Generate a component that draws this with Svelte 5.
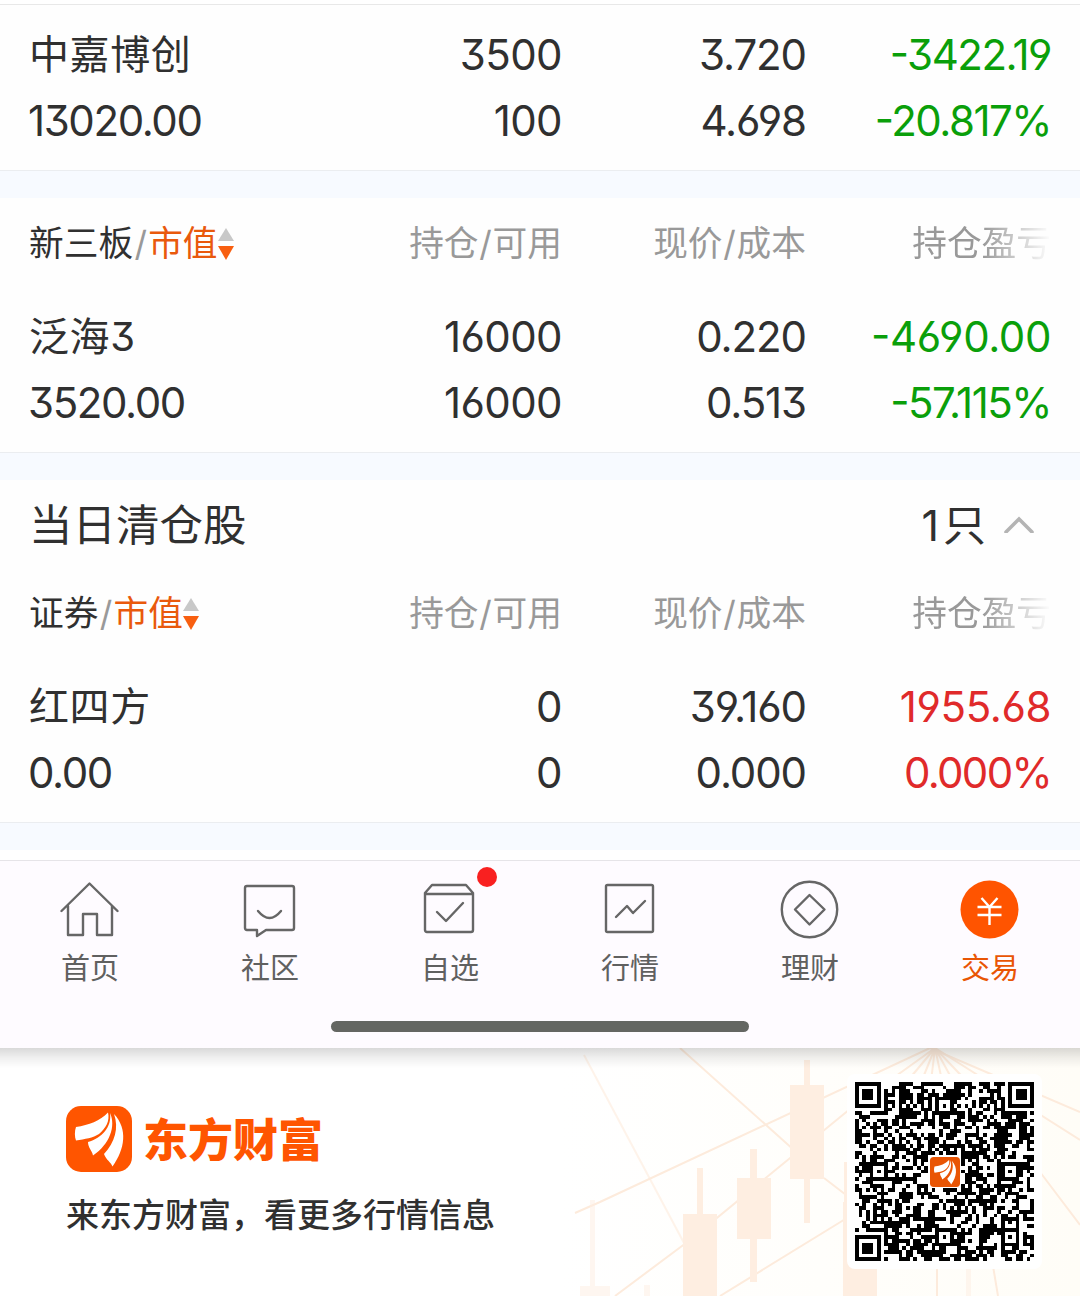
<script lang="ts">
	type Holding = {
		name: string;
		value: string;
		amount: string;
		available: string;
		price: string;
		cost: string;
		profit: string;
		rate: string;
		trend: 'up' | 'down';
		loose?: boolean;
	};

	const main: Holding = {
		name: '中嘉博创', value: '13020.00', amount: '3500', available: '100',
		price: '3.720', cost: '4.698', profit: '-3422.19', rate: '-20.817%', trend: 'down'
	};
	const neeq: Holding = {
		name: '泛海3', value: '3520.00', amount: '16000', available: '16000',
		price: '0.220', cost: '0.513', profit: '-4690.00', rate: '-57.115%', trend: 'down', loose: true
	};
	const cleared: Holding = {
		name: '红四方', value: '0.00', amount: '0', available: '0',
		price: '39.160', cost: '0.000', profit: '1955.68', rate: '0.000%', trend: 'up', loose: true
	};

	const tabs = [
		{ id: 'home', label: '首页' },
		{ id: 'social', label: '社区' },
		{ id: 'watch', label: '自选' },
		{ id: 'market', label: '行情' },
		{ id: 'wealth', label: '理财' },
		{ id: 'trade', label: '交易' }
	];
	let active = $state('trade');

	const QR_SIZE = 49;

	// concentric squares used by both finder and alignment marks
	function ring(x: number, y: number, cx: number, cy: number, r: number) {
		const d = Math.max(Math.abs(x - cx), Math.abs(y - cy));
		if (d > r) return null;
		return r === 2 ? d !== 1 : d !== 2 && d !== 4;
	}

	function buildQr() {
		let seed = 20817;
		let path = '';
		for (let y = 0; y < QR_SIZE; y++) {
			for (let x = 0; x < QR_SIZE; x++) {
				seed = (seed * 1103515245 + 12345) % 2147483648;
				let on = (seed >> 12) % 100 < 54;
				if (x === 6 || y === 6) on = (x + y) % 2 === 0;
				for (const cy of [6, 24, 42]) {
					for (const cx of [6, 24, 42]) {
						on = ring(x, y, cx, cy, 2) ?? on;
					}
				}
				for (const [cx, cy] of [[3, 3], [45, 3], [3, 45]]) {
					on = ring(x, y, cx, cy, 4) ?? on;
				}
				if (Math.abs(x - 24) < 5 && Math.abs(y - 24) < 5) on = false;
				if (on) path += `M${x} ${y}h1v1h-1z`;
			}
		}
		return path;
	}
	const qr = buildQr();
</script>

{#snippet row(h: Holding)}
	<div class="grid row">
		<div class="holding"><span class="name">{h.name}</span><span>{h.value}</span></div>
		<div class="amount"><span>{h.amount}</span><span>{h.available}</span></div>
		<div class="price"><span>{h.price}</span><span>{h.cost}</span></div>
		<div class={h.trend}><span class:loose={h.loose}>{h.profit}</span><span>{h.rate}</span></div>
	</div>
{/snippet}

{#snippet head(title: string)}
	<div class="grid head">
		<div class="sort">
			<span class="dark">{title}</span><span class="slash">/</span><span class="orange">市值</span>
			<svg width="16" height="32" viewBox="0 0 16 32">
				<path d="M8 0l8 13H0z" fill="#c8c8c8" />
				<path d="M0 18h16L8 32z" fill="#f85f10" />
			</svg>
		</div>
		<div>持仓<span class="slash">/</span>可用</div>
		<div>现价<span class="slash">/</span>成本</div>
		<div class="fade">持仓盈亏</div>
	</div>
{/snippet}

{#snippet wing()}
	<path d="M10 21C23 19 34 15 42 6.500C44 15 40 22 33 28C27 32 19 33 10 34.500C8.500 31 8.500 25 10 21z" />
	<path d="M44 7C50 20 44 38 27 49.500C26 44 22 42 22 36C36 32 46 21 44 7z" />
	<path d="M48 8C62 23 59 43 46.500 60.500C45 56 40 54 38 48C49 36 53 22 48 8z" />
{/snippet}

<div class="page">
	<section class="first">{@render row(main)}</section>
	<section>
		{@render head('新三板')}
		{@render row(neeq)}
	</section>
	<section>
		<div class="title">
			<h2>当日清仓股</h2>
			<span class="count"><b>1</b>只</span>
			<svg width="30" height="18" viewBox="0 0 30 18" fill="none" stroke="#b4b4b4" stroke-width="3.6" stroke-linecap="round">
				<path d="M2 17L15 4L28 17" />
			</svg>
		</div>
		{@render head('证券')}
		{@render row(cleared)}
	</section>

	<nav>
		<div class="tabs">
			{#each tabs as tab (tab.id)}
				<button class:active={active === tab.id} onclick={() => (active = tab.id)}>
					<svg width="60" height="60" viewBox="0 0 60 60" fill="none" stroke="#666" stroke-width="2.4" stroke-linejoin="round" stroke-linecap="round">
						{#if tab.id === 'home'}
							<path d="M1.500 31L29.500 3.500L57.500 31M8 26V55H23V34H37V55H52V26" />
						{:else if tab.id === 'social'}
							<path d="M7 6H52Q54 6 54 8V48Q54 50 52 50H26L17 56V50H7Q5 50 5 48V8Q5 6 7 6z" />
							<path d="M18 31Q29.500 45 41 31" />
						{:else if tab.id === 'watch'}
							<path d="M5 14H53V50Q53 52 51 52H7Q5 52 5 50V13L12 5H46L53 13V15M17 32L26 41L43 23" />
						{:else if tab.id === 'market'}
							<rect x="6" y="5" width="47" height="47" rx="1.5" />
							<path d="M16 37L27 26L33 33L45 21" />
						{:else if tab.id === 'wealth'}
							<circle cx="29.5" cy="29.5" r="27.7" />
							<path d="M29.500 15L44.500 29.500L29.500 44.500L15 29.500z" />
						{:else}
							<circle cx="29.5" cy="29.5" r="29" fill="#ff5400" stroke="none" />
							<path d="M21.500 18L29.500 27L37.500 18M29.500 27V45M17.500 27H41.500M17.500 35H41.500" stroke="#fff" stroke-linecap="butt" />
						{/if}
					</svg>
					{#if tab.id === 'watch'}<i class="dot"></i>{/if}
					<span>{tab.label}</span>
				</button>
			{/each}
		</div>
		<div class="handle"></div>
	</nav>

	<footer>
		<svg class="backdrop" width="520" height="248" viewBox="560 1048 520 248">
			<defs>
				<linearGradient id="warm" x1="0" x2="1">
					<stop offset="0" stop-color="#fff" />
					<stop offset="1" stop-color="#fffdf7" />
				</linearGradient>
			</defs>
			<rect x="560" y="1048" width="520" height="248" fill="url(#warm)" />
			<g fill="none" stroke="#fdebdc" stroke-width="2">
				<path d="M584 1055L684 1243" opacity=".6" />
				<path d="M680 1048L795 1151" />
				<path d="M575 1213L600 1202L930 1048L1080 1112" />
				<path d="M615 1296L690 1240L850 1109L935 1048L1080 1140" />
				<path d="M720 1296L860 1210M824 1178L850 1198" />
				<path d="M935 1048L900 1090M935 1048L918 1090M935 1048L930 1090M935 1048L944 1090M935 1048L958 1090M935 1048L975 1090" />
				<path d="M1040 1172L1080 1225M937 1260V1296M992 1260L998 1296" />
			</g>
			<g fill="#feeee1">
				<path d="M790 1085H824V1179H790zM804 1060H810V1085H804zM804 1179H810V1223H804z" />
				<path d="M737 1178H771V1239H737zM750 1149H757V1178H750zM750 1239H757V1282H750z" />
				<path d="M683 1214H717V1296H683zM697 1168H703V1214H697z" />
				<path d="M843 1202H877V1296H843zM844 1162H850V1202H844z" />
				<path d="M580 1286H610V1296H580zM590 1200H595V1286H590zM644 1285H650V1296H644zM966 1260H971V1296H966z" opacity=".5" />
			</g>
		</svg>
		<div class="brand">
			<div class="logo">
				<svg width="66" height="66" viewBox="0 0 66 66">
					<rect width="66" height="66" rx="15" fill="#ff5500" />
					<g fill="#fff">{@render wing()}</g>
				</svg>
				<strong>东方财富</strong>
			</div>
			<p>来东方财富，看更多行情信息</p>
		</div>
		<div class="qr">
			<svg width="179" height="179" viewBox="0 0 49 49" shape-rendering="crispEdges">
				<path d={qr} />
			</svg>
			<svg class="badge" width="30" height="30" viewBox="0 0 66 66">
				<rect width="66" height="66" rx="8" fill="#e95504" />
				<g fill="#fff">{@render wing()}</g>
			</svg>
		</div>
	</footer>
</div>

<style>
	:global(body) {
		margin: 0;
		background: #fff;
	}

	.page {
		width: 1080px;
		height: 1296px;
		overflow: hidden;
		display: flex;
		flex-direction: column;
		font-family: Inter, 'Noto Sans CJK SC', sans-serif;
		color: #303030;
	}

	section {
		box-sizing: border-box;
		background: #fefefe;
		border-bottom: 1px solid #ebedf0;
		box-shadow: 0 27px #f7faff;
		margin-bottom: 27px;
		flex: none;
	}

	.first {
		margin-top: 4px;
		border-top: 1px solid #e8e8e8;
		padding-top: 17px;
	}

	.grid {
		display: grid;
		grid-template-columns: 289px 244px 244px 245px;
		padding-left: 29px;
	}

	.grid > div:not(:first-child) {
		text-align: right;
	}

	.row {
		height: 148px;
		font-size: 42px;
		line-height: 66px;
		font-feature-settings: 'case', 'cv03', 'cv04', 'cv09';
	}

	.row span {
		display: block;
		white-space: nowrap;
	}

	.holding {
		letter-spacing: -1.4px;
		margin-left: -1px;
	}

	.row .name {
		margin-left: 1px;
		font-size: 40px;
		letter-spacing: 0.6px;
	}

	.amount {
		letter-spacing: -0.6px;
	}

	.price {
		letter-spacing: -1.1px;
	}

	.down {
		color: #0a9f0a;
		letter-spacing: -1.5px;
	}

	.up {
		color: #e02a2a;
		letter-spacing: -1.7px;
	}

	.row .loose {
		letter-spacing: -0.4px;
	}

	.head {
		height: 106px;
		line-height: 91px;
		font-size: 34.7px;
		color: #999;
	}

	.sort {
		display: flex;
		align-items: center;
		height: 91px;
	}

	.slash {
		margin: 0 0.8px;
	}

	.sort .slash {
		margin: 0 1.3px;
	}

	.dark {
		color: #303030;
	}

	.orange {
		color: #e9590c;
	}

	.fade {
		-webkit-mask-image: linear-gradient(90deg, #000 72%, transparent 100%);
		mask-image: linear-gradient(90deg, #000 72%, transparent 100%);
	}

	.title {
		box-sizing: border-box;
		display: flex;
		align-items: center;
		height: 88px;
		padding: 0 46px 0 29px;
		font-size: 43px;
	}

	h2 {
		margin: 0 0 4px;
		flex: 1;
		font-size: 43.5px;
		font-weight: 400;
	}

	.count {
		margin: 0 18px 4px 0;
	}

	b {
		margin-right: 4px;
		font-weight: 400;
	}

	nav {
		box-sizing: border-box;
		flex: none;
		height: 188px;
		margin-top: 10px;
		border-top: 1px solid #e6e4e8;
		background: #fefbff;
	}

	.tabs {
		display: grid;
		grid-template-columns: repeat(6, 180px);
		height: 160px;
	}

	button {
		display: flex;
		flex-direction: column;
		align-items: center;
		position: relative;
		padding: 19px 0 0;
		border: 0;
		background: none;
		font: inherit;
		font-size: 29px;
		line-height: 57px;
		color: #606060;
	}

	button.active {
		color: #e95504;
	}

	.dot {
		position: absolute;
		left: 117px;
		top: 6px;
		width: 20px;
		height: 20px;
		border-radius: 50%;
		background: #f92020;
	}

	.handle {
		width: 418px;
		height: 11px;
		margin: 0 auto;
		border-radius: 6px;
		background: #646662;
	}

	footer {
		box-sizing: border-box;
		position: relative;
		display: flex;
		justify-content: space-between;
		height: 248px;
		padding: 26px 38px 0 66px;
	}

	footer::after {
		content: '';
		position: absolute;
		inset: 0 0 auto;
		height: 20px;
		background: linear-gradient(rgba(0, 0, 0, 0.15), rgba(0, 0, 0, 0.06) 50%, transparent);
	}

	.backdrop {
		position: absolute;
		right: 0;
		top: 0;
	}

	.brand {
		padding-top: 32px;
	}

	.logo {
		display: flex;
		align-items: center;
		gap: 11px;
		height: 66px;
		color: #ff5500;
		font-size: 45px;
	}

	strong {
		margin-bottom: 4px;
		font-weight: 900;
	}

	p {
		margin: 17px 0 0;
		font-size: 33px;
		line-height: 52px;
		font-weight: 500;
	}

	.qr {
		position: relative;
		display: grid;
		place-items: center;
		width: 195px;
		height: 195px;
		border-radius: 8px;
		background: #fff;
	}

	.badge {
		position: absolute;
	}
</style>
